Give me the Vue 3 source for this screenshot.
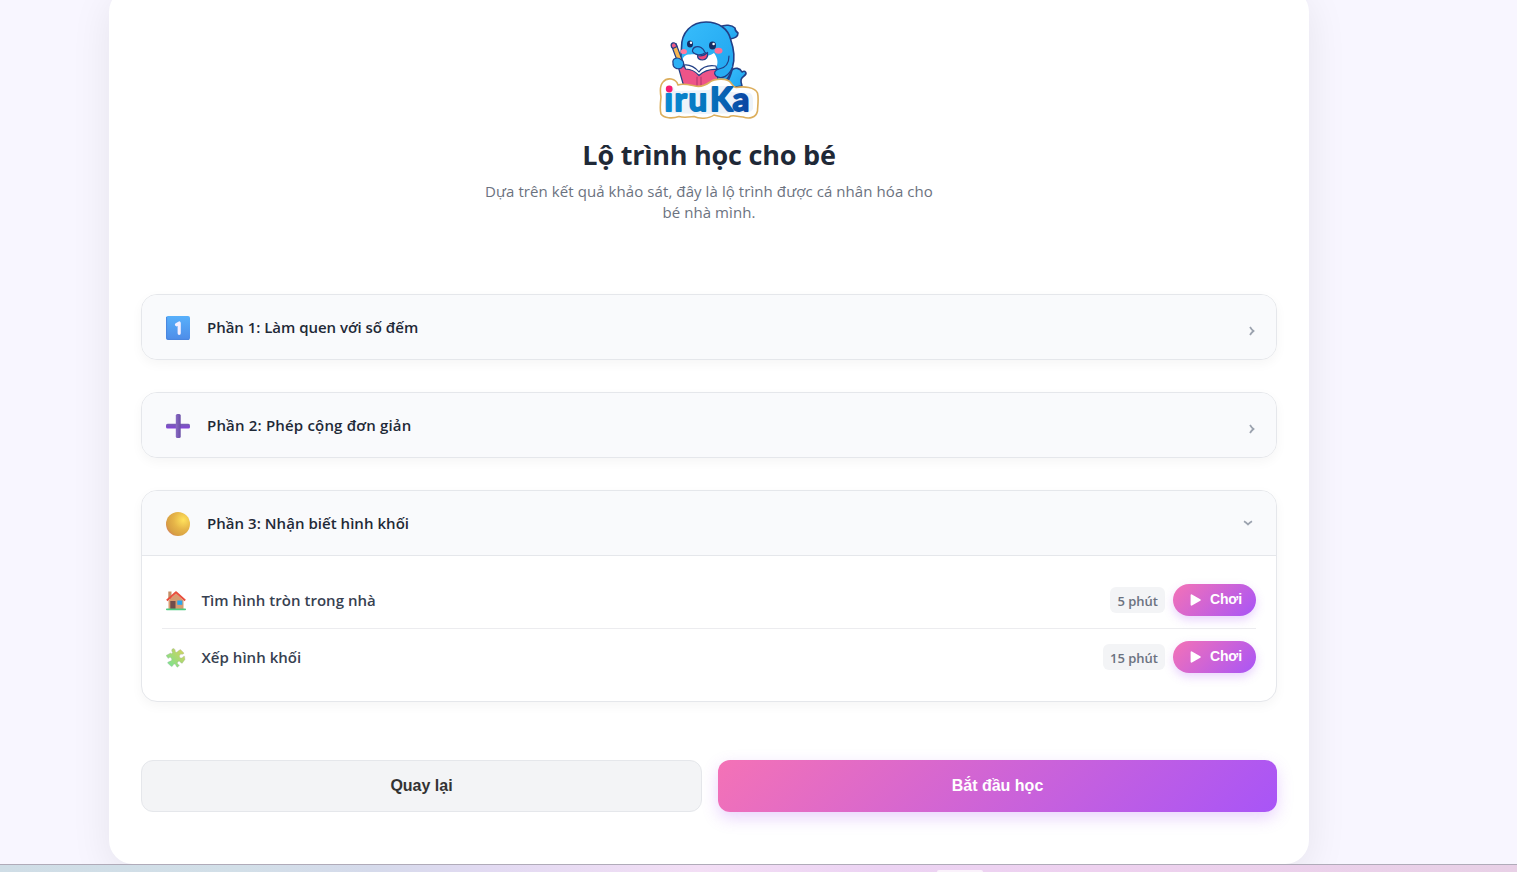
<script setup>
import { ref } from 'vue'

const sections = ref([
  { id: 1, icon: 'one', title: 'Phần 1: Làm quen với số đếm', open: false, lessons: [] },
  { id: 2, icon: 'plus', title: 'Phần 2: Phép cộng đơn giản', open: false, lessons: [] },
  {
    id: 3,
    icon: 'circle',
    title: 'Phần 3: Nhận biết hình khối',
    open: true,
    lessons: [
      { icon: 'house', name: 'Tìm hình tròn trong nhà', time: '5 phút' },
      { icon: 'puzzle', name: 'Xếp hình khối', time: '15 phút' },
    ],
  },
])
</script>

<template>
  <div class="page">
    <div class="view">
      <main class="card">
        <header class="head">
          <svg class="logo" viewBox="0 0 100 100">
            <defs>
              <linearGradient id="body" x1="0" y1="0" x2="1" y2="1">
                <stop offset="0" stop-color="#38bdfb" />
                <stop offset="1" stop-color="#1ea3ee" />
              </linearGradient>
              <linearGradient id="word" gradientUnits="userSpaceOnUse" x1="6" y1="0" x2="94" y2="0">
                <stop offset="0" stop-color="#0a8ad2" />
                <stop offset=".5" stop-color="#0674bd" />
                <stop offset="1" stop-color="#0b3f9f" />
              </linearGradient>
            </defs>
            <g stroke="#223f86" stroke-width="1.6" stroke-linejoin="round" stroke-linecap="round">
              <path d="M68 62C71 58 72 54 73 50C76 47 81 48 83 52C86 50 89 53 85 56C82 58 81 60 83 66L70 68Z" fill="url(#body)" />
              <path d="M61 7C66 4 73 5 76 8C76 10 76 11 79 13C79 17 76 18 71 19Z" fill="url(#body)" />
              <path d="M22.500 28C22 12 33 2 47 2C60 2 69 9 71.500 19C75 29 76 39 73.500 47C71 57 66 65 56 68L26 68C22 55 21 39 22.500 28Z" fill="url(#body)" />
            </g>
            <path d="M24 38C27 33 32 35 36 34C41 36 50 37 55 33C58 37 60 42 57 48L52 53L27 52C24 47 23 42 24 38Z" fill="#fff" />
            <path d="M38.500 35.500C42 36.500 45.500 35.500 48.500 32.500C49.500 37 47 40 43.500 40C40.500 39.800 38.500 38 38.500 35.500Z" fill="#ed477c" stroke="#223f86" stroke-width="1.200" stroke-linejoin="round" />
            <path d="M33.500 31C33 27 38 25.500 42 27.500C44 28.800 45.500 30.500 46 32C42 36 37 35.500 33.500 31Z" fill="#2bb0f5" />
            <path d="M33.500 30.500C34 26.500 39 25.800 42 27.500C43.500 28.500 45 30 45.500 31.500M33.500 31.500C36 35.500 42 36 46.500 32.500" fill="none" stroke="#223f86" stroke-width="1.200" stroke-linecap="round" />
            <ellipse cx="31" cy="24" rx="3" ry="3.500" fill="#172c63" />
            <ellipse cx="53.500" cy="25.500" rx="3.500" ry="4" fill="#172c63" />
            <circle cx="32" cy="22.700" r="1.200" fill="#fff" />
            <circle cx="54.600" cy="24" r="1.300" fill="#fff" />
            <ellipse cx="24.800" cy="31.500" rx="3.100" ry="2.600" fill="#ff7a9f" />
            <ellipse cx="59.500" cy="30.800" rx="4" ry="3" fill="#ff6f96" />
            <g stroke="#223f86" stroke-width="1.200" stroke-linejoin="round" stroke-linecap="round">
              <path d="M12.500 25.500L17 23.500L25 45L24.500 50L20.500 47Z" fill="#f8b652" />
              <path d="M12.500 27C11 22.500 16 21.500 17 24.500L18 26.500L14 28.500Z" fill="#ef5c86" />
              <path d="M19 46C22 45 23 47 26 47C32 48 37 50 40 54C45 49 51 49 58 48L59 66L42 68L25 67Z" fill="#ee5488" />
              <path d="M25 45C31 44 37 48 40 52C44 46 50 45 57 46L57.500 49.500C50 49 45 51 40 55.500C36 51 31 49 26.500 49Z" fill="#fff" />
              <path d="M38 57L38 67M42 57L42 67" fill="none" stroke="#b93b73" />
              <path d="M14 43C13 38.500 18 36.500 22 39.500C25.500 41 25.500 45.500 22.500 48C18 50 13.500 47.500 14 43Z" fill="#2bb0f5" />
              <path d="M70 36C70 44 66 48 60 49C56 50 54 53 57 56C63 60 70 56 73.500 47" fill="#27adf3" />
            </g>
            <path d="M4 62C8 57 17 58 19 65C24 63 31 65 36 66C41 67 47 65 51 62C56 58 69 58 72 63C74 65 74 67 77 67.500C85 66 96 67 98.500 73C100 79 98.500 87 98.500 91C97 98 90 99 84 97C78 97 74 94 70 97C65 98 59 96 55 95C50 99 40 99 35 96.500C30 97 25 98 20 96.500C13 99 5 98 2 94C.5 89 1.500 82 2 77C1 71 1 65 4 62Z" fill="#fff" stroke="#dcae5c" stroke-width="1.600" stroke-linejoin="round" />
            <path d="M7 69C9 63 15 65 16 71L50 70L55 66H67L71 72L91 73Q94 75 94 80V89Q91 94 83 93L44 94L9 93Q5 90 6 83Z" fill="#edf3fa" />
            <text x="5.500 15.500 29.500 51 73.500" y="90.500" class="wordmark">ıruKa</text>
            <circle cx="10.200" cy="69" r="3.400" fill="#f51a70" />
          </svg>
          <h1>Lộ trình học cho bé</h1>
          <p>Dựa trên kết quả khảo sát, đây là lộ trình được cá nhân hóa cho<br />bé nhà mình.</p>
        </header>

        <div class="sections">
          <section v-for="s in sections" :key="s.id" class="section">
            <div class="bar" :class="{ opened: s.open }" @click="s.open = !s.open">
              <svg v-if="s.icon === 'one'" class="icon" viewBox="0 0 24 24">
                <defs>
                  <linearGradient id="key" x1="0" y1="0" x2="0" y2="1">
                    <stop offset="0" stop-color="#58b0fb" />
                    <stop offset="1" stop-color="#4e8ce8" />
                  </linearGradient>
                </defs>
                <rect width="24" height="24" rx="2" fill="url(#key)" />
                <path d="M.6 1V21.500Q.6 23.400 3 23.400H23" fill="none" stroke="#4a86de" stroke-width="1" />
                <path d="M10.500 8.700L13.200 7V17.300" fill="none" stroke="#f5efff" stroke-width="3.200" stroke-linecap="round" stroke-linejoin="round" />
              </svg>
              <svg v-else-if="s.icon === 'plus'" class="icon" viewBox="0 0 24 24">
                <defs>
                  <linearGradient id="plusV" x1="0" y1="0" x2="1" y2="0">
                    <stop offset="0" stop-color="#8a6bc4" />
                    <stop offset="1" stop-color="#6a4ea6" />
                  </linearGradient>
                  <linearGradient id="plusH" x1="0" y1="0" x2="0" y2="1">
                    <stop offset="0" stop-color="#7861b0" />
                    <stop offset="1" stop-color="#8440dc" />
                  </linearGradient>
                </defs>
                <rect x="0" y="9.800" width="24" height="4.800" rx="1.600" fill="url(#plusH)" />
                <rect x="9.800" y="0" width="4.900" height="24" rx="1.600" fill="url(#plusV)" />
              </svg>
              <svg v-else class="icon" viewBox="0 0 24 24">
                <defs>
                  <radialGradient id="ball" cx=".72" cy=".33" r=".8">
                    <stop offset="0" stop-color="#ffe25c" />
                    <stop offset=".5" stop-color="#e6b548" />
                    <stop offset=".85" stop-color="#d8a043" />
                    <stop offset="1" stop-color="#d4825a" />
                  </radialGradient>
                </defs>
                <circle cx="12" cy="12" r="12" fill="url(#ball)" />
              </svg>
              <span class="title" :class="'title-' + s.icon">{{ s.title }}</span>
              <svg v-if="s.open" class="chev down" viewBox="0 0 10 6"><path d="M1 1.200Q3.400 2.500 5 4.500Q6.600 2.500 9 1.200" /></svg>
              <svg v-else class="chev" viewBox="0 0 6 10"><path d="M1 1Q2.500 3.500 4.500 5Q2.500 6.500 1 9" /></svg>
            </div>

            <ul v-if="s.open" class="lessons">
              <li v-for="l in s.lessons" :key="l.name">
                <svg v-if="l.icon === 'house'" class="small" viewBox="0 0 20 20">
                  <path d="M2.300.5H5.500V8H2.300Z" fill="#c58f67" />
                  <path d="M2.500 9.500L10 2.500L17.500 9.500V18H2.500Z" fill="#d79c70" />
                  <path d="M.8 9.600L10 1.200L19.200 9.600" fill="none" stroke="#e94f3d" stroke-width="2" stroke-linejoin="round" />
                  <rect x="4.300" y="10" width="5.200" height="8" fill="#704c4b" />
                  <rect x="11.300" y="9.500" width="5" height="4.300" fill="#28a6ef" />
                  <rect x="0" y="17.500" width="20" height="1.700" rx=".8" fill="#4ecb80" />
                </svg>
                <svg v-else class="small" viewBox="0 0 20 20">
                  <defs>
                    <linearGradient id="piece" x1="1" y1="0" x2="0" y2="1">
                      <stop offset="0" stop-color="#d9d45b" />
                      <stop offset=".5" stop-color="#a6d974" />
                      <stop offset="1" stop-color="#6ee69a" />
                    </linearGradient>
                  </defs>
                  <path
                    d="M0 7.500L4.500 4.900C5.700 6.200 7 5 6.100 3.700C4.800 2 6.600-.2 8.400.9C9.900 2 8.900 3.700 10 4.300C11.200 4.600 12.500 2 14.500 1.500L18 5C17.400 7.300 15.300 5.400 14 6.800C12.800 8.600 14 10.500 15.600 9.900C17 9.300 16.800 8 18.600 8.200L19 11.500L16.300 15.200C14.500 15.700 14.400 12.800 12.500 13.400C10.400 14.600 11.700 16.700 13.500 17L11.700 19.300C9.800 19 10 16 8.500 16C7 16.300 7 18.800 5.300 18.500L1.500 15C2.300 13 5.500 14 5.700 11.600C5.500 9 3.100 9 2.200 10.600Z"
                    fill="url(#piece)"
                    stroke="#a9aeb5"
                    stroke-width=".3"
                  />
                </svg>
                <span class="name">{{ l.name }}</span>
                <span class="time">{{ l.time }}</span>
                <button class="play">
                  <svg viewBox="0 0 11 12"><path d="M1.500 1.200L9.800 6L1.500 10.800Z" /></svg>
                  <span>Chơi</span>
                </button>
              </li>
            </ul>
          </section>
        </div>

        <footer class="actions">
          <button class="back">Quay lại</button>
          <button class="start">Bắt đầu học</button>
        </footer>
      </main>
    </div>
    <div class="desk"><i class="tab"></i></div>
  </div>
</template>

<style>
body {
  margin: 0;
  overflow: hidden;
}
</style>

<style scoped>
.page {
  box-sizing: border-box;
  width: 1517px;
  height: 872px;
  overflow: hidden;
  display: flex;
  flex-direction: column;
  font-family: 'Open Sans', 'Noto Sans', sans-serif;
}
.view {
  height: 864px;
  flex: none;
  overflow: hidden;
  background: #f8f6ff;
}
.card {
  box-sizing: border-box;
  width: 1200px;
  height: 876px;
  margin: -12px 0 0 109px;
  padding: 32px;
  background: #fff;
  border-radius: 24px;
  box-shadow: 0 10px 40px rgba(0, 0, 0, 0.08);
}
.head {
  height: 274px;
  text-align: center;
}
.logo {
  display: block;
  width: 100px;
  height: 100px;
  margin: 0 auto;
}
.wordmark {
  font: 700 33px Lato, sans-serif;
  fill: url(#word);
  stroke: url(#word);
  stroke-width: 1.9;
  stroke-linejoin: round;
}
h1 {
  margin: 17px 0 0;
  font-size: 27px;
  line-height: 36px;
  font-weight: 700;
  letter-spacing: -0.22px;
  color: #1f2937;
}
p {
  margin: 8px 0 0;
  font-size: 15px;
  line-height: 21px;
  letter-spacing: 0.08px;
  color: #6b7280;
}
.sections {
  display: flex;
  flex-direction: column;
  gap: 32px;
}
.section {
  border: 1px solid #e5e7eb;
  border-radius: 16px;
  background: #fff;
  box-shadow: 0 4px 12px rgba(0, 0, 0, 0.04);
  overflow: hidden;
}
.bar {
  display: flex;
  align-items: center;
  height: 64px;
  padding: 0 21px 0 24px;
  background: #f9fafc;
}
.bar.opened {
  border-bottom: 1px solid #e5e7eb;
}
.icon {
  width: 24px;
  height: 24px;
  margin: 1px 17px 0 0;
}
.title {
  flex: 1;
  font-size: 15px;
  font-weight: 600;
  color: #1f2937;
}
.title-one {
  letter-spacing: -0.03px;
}
.title-plus {
  letter-spacing: 0.18px;
}
.title-circle {
  letter-spacing: 0.04px;
}
.chev {
  width: 6px;
  height: 10px;
  margin-top: 7px;
  fill: none;
  stroke: #9ca3af;
  stroke-width: 1.7;
}
.chev.down {
  width: 10px;
  height: 6px;
  margin: 0 2px 0 0;
}
.lessons {
  list-style: none;
  margin: 0;
  padding: 16px 20px;
}
.lessons li {
  display: flex;
  align-items: center;
  height: 56px;
}
.lessons li + li {
  border-top: 1px solid #ececef;
}
.small {
  width: 20px;
  height: 20px;
  margin: 2px 16px 0 3.5px;
}
.name {
  flex: 1;
  font-size: 15px;
  font-weight: 600;
  letter-spacing: 0.03px;
  color: #374151;
}
.time {
  padding: 0 7px 0 7.5px;
  margin: 0 8px 0 0;
  height: 26px;
  line-height: 28px;
  font-size: 13px;
  font-weight: 600;
  color: #6b7280;
  background: #f3f4f6;
  border-radius: 6px;
}
button {
  border: 0;
  font-family: 'Liberation Sans', Arial, sans-serif;
  font-weight: 700;
}
.play {
  display: flex;
  align-items: center;
  width: 83px;
  height: 32px;
  padding: 0 0 0 17px;
  border-radius: 16px;
  font-size: 14px;
  letter-spacing: -0.15px;
  color: #fff;
  background: linear-gradient(135deg, #f472b6, #a855f7);
  box-shadow: 0 4px 10px rgba(168, 85, 247, 0.25);
}
.play svg {
  width: 11px;
  height: 12px;
  margin-right: 9px;
  fill: #fff;
  stroke: #fff;
  stroke-width: 1.8;
  stroke-linejoin: round;
}
.play span {
  margin-top: -2px;
}
.actions {
  display: flex;
  gap: 16px;
  margin-top: 58px;
}
.actions button {
  height: 52px;
  padding: 0;
  border-radius: 12px;
  font-size: 16px;
}
.actions .back {
  width: 561px;
  color: #333;
  background: #f3f4f6;
  border: 1px solid #e5e7eb;
}
.actions .start {
  width: 559px;
  color: #fff;
  background: linear-gradient(135deg, #f472b6, #a855f7);
  box-shadow: 0 6px 16px rgba(168, 85, 247, 0.25);
}
.desk {
  box-sizing: border-box;
  height: 8px;
  border-top: 1px solid #b0abb9;
  background: linear-gradient(90deg, #cfdde6 0, #d2dfe8 240px, #d5daeb 370px, #e2daf2 490px, #f3def5 700px, #ecd3f3 880px, #eed1ef 1100px, #e8d0e6 1517px);
}
.tab {
  display: block;
  width: 46px;
  height: 2px;
  margin: 5px 0 0 937px;
  border-radius: 3px 3px 0 0;
  background: #faf2fb;
}
</style>
